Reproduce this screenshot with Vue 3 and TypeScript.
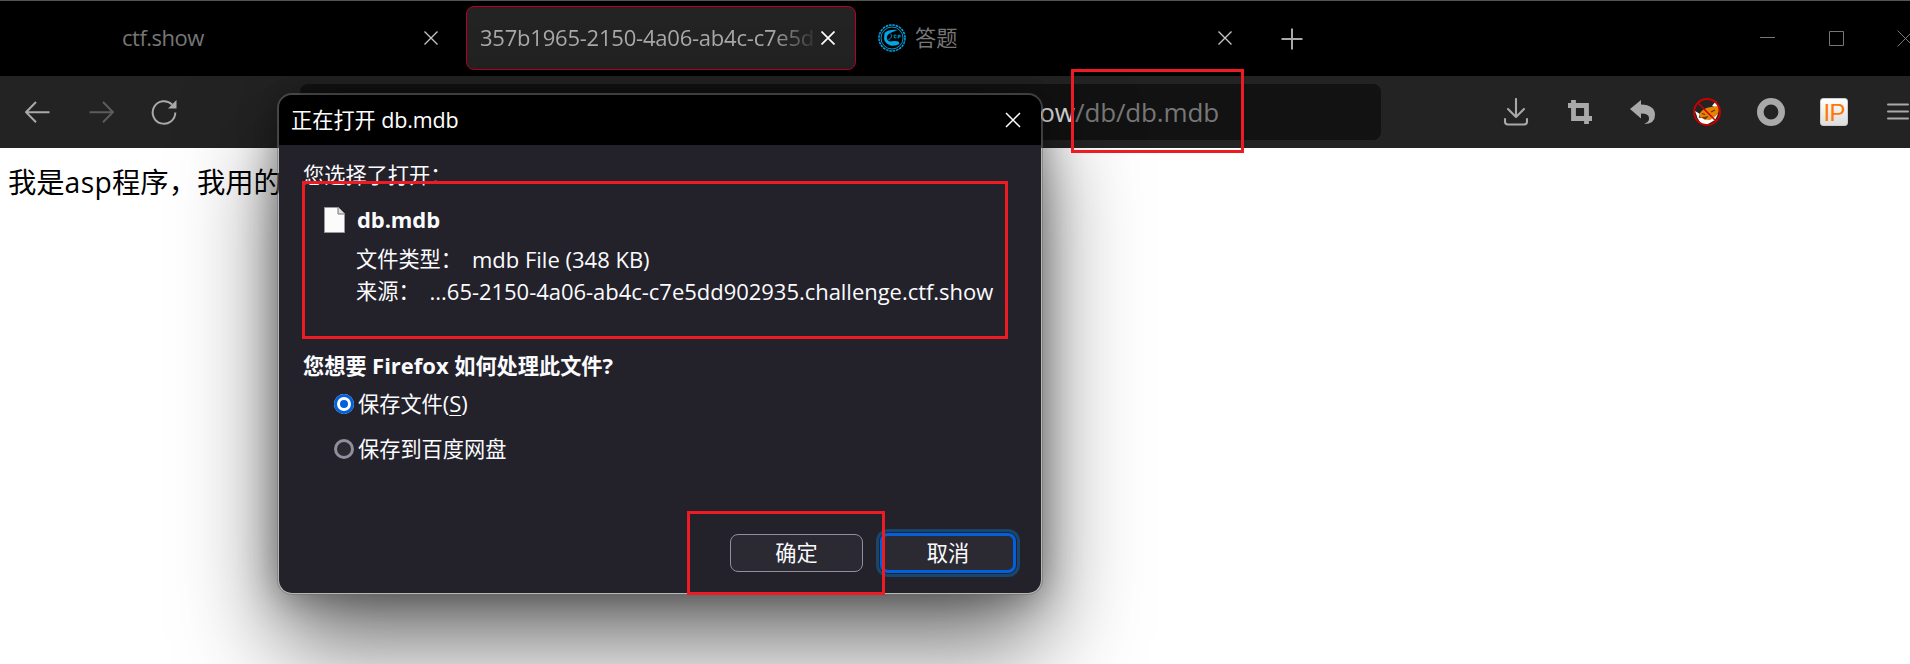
<script setup lang="ts">
import { ref } from 'vue'

const choice = ref<'save' | 'cloud'>('save')
const details = [
  { label: '文件类型：', value: 'mdb File (348 KB)', cls: 'type' },
  { label: '来源：', value: '...65-2150-4a06-ab4c-c7e5dd902935.challenge.ctf.show', cls: 'source' },
]
</script>

<template>
  <div class="screen">
    <header class="tabs">
      <div class="tab first">
        <span class="ctf">ctf.show</span>
        <svg class="x" width="14" height="14" viewBox="0 0 14 14"><path d="M.5.5l13 13M13.5.5l-13 13" /></svg>
      </div>
      <div class="tab active">
        <span class="host">357b1965-2150-4a06-ab4c-c7e5d</span>
        <svg class="x" width="14" height="14" viewBox="0 0 14 14"><path d="M.5.5l13 13M13.5.5l-13 13" /></svg>
      </div>
      <div class="tab third">
        <svg class="fav" width="28" height="28" viewBox="0 0 28 28" fill="none" stroke="#00a8e8">
          <circle cx="14" cy="14" r="13" stroke-width="1.500" stroke-dasharray="2.600 .8" />
          <circle cx="14" cy="14" r="11" stroke-width=".9" />
          <path d="M6.500 9Q11 5 19.500 6L14 8.200Q9 10 8.800 13.500Q9 17 12 17.500Q17 16.500 20.500 17.500L21.500 20Q17 22.500 12.500 21.500Q7 19.500 6 15Z" fill="#00a8e8" stroke="none" />
          <path d="M12 9.500Q15 11 13 13.500L10.500 16M18.500 11.200h-2.300v2.600h2.300M20.200 14.500v-3.200h2v1.600h-2" stroke-width=".9" />
        </svg>
        <span class="quiz">答题</span>
        <svg class="x" width="14" height="14" viewBox="0 0 14 14"><path d="M.5.5l13 13M13.5.5l-13 13" /></svg>
      </div>
      <svg class="plus" width="22" height="22" viewBox="0 0 22 22"><path d="M11 .5v21M.5 11h21" /></svg>
      <div class="controls">
        <svg width="15" height="17" viewBox="0 0 15 17"><path d="M0 7.500h15" /></svg>
        <svg width="15" height="15" viewBox="0 0 15 15"><path d="M.5.5h14v14H.5z" /></svg>
        <svg width="17" height="17" viewBox="0 0 17 17"><path d="M.5.5l16 16M16.500.5l-16 16" /></svg>
      </div>
    </header>

    <nav class="toolbar">
      <div class="nav">
        <svg width="25" height="22" viewBox="0 0 25 22"><path d="M24.500 11.200H1.500M11 1L1 11.200L11 21.200" /></svg>
        <svg class="dim" width="25" height="22" viewBox="0 0 25 22"><path d="M.5 11.200H23.500M14 1L24 11.200L14 21.200" /></svg>
        <svg width="26" height="26" viewBox="0 0 26 26"><path d="M24.300 13.500A11.300 11.300 0 1 1 21 5.500" /><path d="M25.500 1v8.500H17z" fill="#a9a9a9" stroke="none" /></svg>
      </div>
      <div class="url"><span class="bright">challenge.ctf.show</span><span class="path">/db/db.mdb</span></div>
      <div class="actions">
        <svg width="26" height="28" viewBox="0 0 26 28"><path d="M13 1v18M5 11l8 8 8-8M2 21v2.500q0 3 3 3h16q3 0 3-3V21" fill="none" stroke="#a9a9a9" stroke-width="2.100" stroke-linecap="round" stroke-linejoin="round" /></svg>
        <svg width="26" height="26" viewBox="0 0 26 26"><path d="M6.500 1v18.500h18.500M1 6.500h18.500v18.500" fill="none" stroke="#a9a9a9" stroke-width="4.800" /></svg>
        <svg width="26" height="26" viewBox="0 0 26 26"><path d="M0 10L11 1v4.500Q25 6 25 16Q25 25 14 25Q19.500 23 19 18.500Q18.500 14.500 11 14.500V19.500Z" fill="#a9a9a9" /></svg>
        <svg width="28" height="28" viewBox="0 0 28 28">
          <path d="M2 13l5 3-2 5zM19 8l4-5 2 7zM4 19q8 3 21-3l-3 6-7 4H8z" fill="#fff" />
          <path d="M7 15Q10 10 18 9L25 8Q27 14 23 18L17 22Q10 22 6 18Z" fill="#e88204" />
          <path d="M9 15.500l3 1M18 14l4-2M10 19.500l4-.5-2 2z" stroke="#663600" stroke-width="1.200" fill="#fff" />
          <circle cx="14" cy="14" r="13" fill="none" stroke="#c80000" stroke-width="1.900" /><path d="M5 5l18 18" stroke="#c80000" stroke-width="1.600" />
        </svg>
        <svg width="30" height="28" viewBox="0 0 30 28"><circle cx="15" cy="14" r="10.700" fill="none" stroke="#a9a9a9" stroke-width="6.600" /></svg>
        <span class="ip">IP</span>
        <svg width="22" height="18" viewBox="0 0 22 18"><path d="M1 1.500h20M1 8.500h20M1 15.500h20" fill="none" stroke="#a9a9a9" stroke-width="2" stroke-linecap="round" /></svg>
      </div>
    </nav>

    <main class="page">我是<span>asp</span>程序，我用的</main>

    <section class="dialog">
      <div class="title">
        <span>正在打开 <i>db.mdb</i></span>
        <svg width="16" height="16" viewBox="0 0 16 16"><path d="M1 1l14 14M15 1L1 15" fill="none" stroke="#fff" stroke-width="1.500" /></svg>
      </div>
      <div class="body">
        <div class="intro">您选择了打开：</div>
        <div class="file">
          <svg width="21" height="26" viewBox="0 0 21 26"><path d="M.5.5h14l6 6v19H.5z" fill="#fbfbfb" stroke="#999" /><path d="M14 .5V7h6.500" fill="#ddd" stroke="#777" /></svg>
          <b>db.mdb</b>
        </div>
        <div v-for="d in details" :key="d.cls" class="detail">
          <span class="label">{{ d.label }}</span><span :class="d.cls">{{ d.value }}</span>
        </div>
        <div class="question">您想要 <i>Firefox</i> 如何处理此文件<i>?</i></div>
        <div class="option" @click="choice = 'save'"><span class="radio" :class="{ on: choice === 'save' }"></span><span class="text">保存文件<i>(<u>S</u>)</i></span></div>
        <div class="option" @click="choice = 'cloud'"><span class="radio" :class="{ on: choice === 'cloud' }"></span><span class="text">保存到百度网盘</span></div>
        <div class="buttons"><button>确定</button><button class="focus">取消</button></div>
      </div>
    </section>

    <div class="mark mark-url"></div>
    <div class="mark mark-file"></div>
    <div class="mark mark-ok"></div>
  </div>
</template>

<style>
body { margin: 0; overflow: hidden; }
</style>

<style scoped>
.screen { position: relative; width: 1910px; height: 664px; overflow: hidden; background: #fff; font-family: "Open Sans", "Noto Sans CJK SC", sans-serif; font-size: 21.200px; }
.screen * { box-sizing: border-box; }
i { font-style: normal; font-size: 22px; line-height: 1; }
svg { display: block; flex: none; }
.tabs { height: 76px; background: #000; border-top: 1px solid #555; display: flex; align-items: center; }
.tab { flex: none; height: 64px; display: flex; align-items: center; white-space: nowrap; color: #777; margin-bottom: 1px; }
.tab span { margin-top: -2px; }
.tab .x { fill: none; stroke: #c4c4c4; stroke-width: 1.400; }
.first { width: 466px; padding-left: 122px; }
.ctf { font-size: 22px; letter-spacing: -.5px; width: 302px; }
.active { width: 390px; border: 1px solid #b8002b; border-radius: 8px; background: #232323; padding-left: 13px; }
.host { font-size: 22px; color: #a9a9a9; width: 339px; letter-spacing: -.22px; margin-right: 2px; -webkit-mask-image: linear-gradient(90deg, #000 292px, transparent 340px); mask-image: linear-gradient(90deg, #000 292px, transparent 340px); }
.active .x { stroke: #fff; stroke-width: 1.700; }
.third { width: 425px; padding-left: 22px; }
.quiz { width: 312px; padding-left: 9px; }
.third .quiz { margin-top: -4px; }
.plus { fill: none; stroke: #a9a9a9; stroke-width: 2; margin-top: 1px; }
.controls { display: flex; align-items: center; gap: 53.500px; margin-left: 457px; fill: none; stroke: #777; stroke-width: 1; }
.toolbar { height: 72px; background: #232323; display: flex; align-items: center; }
.nav { flex: none; display: flex; width: 300px; align-items: center; padding-left: 25px; gap: 39px; fill: none; stroke: #a9a9a9; stroke-width: 2; }
.nav svg:last-child { margin-left: -2px; }
.dim { stroke: #5c5c5c; }
.url { flex: none; width: 1081px; height: 56px; border-radius: 8px; background: #121212; display: flex; align-items: center; font-size: 26px; white-space: nowrap; }
.url span { margin-top: -1px; }
.bright { width: 775px; text-align: right; color: #e0e0e0; }
.path { color: #777; letter-spacing: -.15px; }
.actions { flex: none; display: grid; grid-template-columns: repeat(7, 63.700px); margin-left: 103px; align-items: center; justify-items: center; }
.ip { width: 28px; height: 28px; border-radius: 3px; background: linear-gradient(#fff, #ddd); border: 1px solid #ccc; color: #ff7800; font: 24px/27px "Liberation Sans", sans-serif; text-align: center; letter-spacing: -.5px; }
.page { height: 516px; padding: 13px 8px; font-size: 28.300px; line-height: 42px; color: #000; }
.page span { letter-spacing: .3px; }
.dialog { position: absolute; left: 277px; top: 93px; width: 766px; height: 502px; border: 2px solid rgba(110, 110, 110, .5); border-radius: 15px; background: #23222b; background-clip: padding-box; color: #fbfbfe; overflow: hidden; box-shadow: 0 48px 96px rgba(0, 0, 0, .58), 0 3px 36px rgba(0, 0, 0, .34); display: flex; flex-direction: column; white-space: nowrap; }
.title { flex: none; height: 50px; background: #000; display: flex; align-items: center; justify-content: space-between; padding: 0 20px 0 12px; color: #fff; }
.title span { margin-top: -4px; }
.title i { font-size: 21.500px; letter-spacing: -.15px; }
.body { flex: 1; padding: 15px 22px 0 24px; display: flex; flex-direction: column; }
.body > div { flex: none; }
.intro { height: 30px; line-height: 30px; }
.file { height: 30px; margin: 15px 0 9px 21px; display: flex; align-items: center; gap: 12px; }
.file b { font-size: 22px; margin-top: -3px; letter-spacing: -.1px; }
.detail { height: 32px; line-height: 32px; padding-left: 53px; display: flex; }
.label { margin-right: 10px; margin-top: -1px; }
.type, .source { font-size: 22px; margin-top: -1px; }
.source { letter-spacing: -.03px; }
.question { height: 30px; line-height: 30px; margin-top: 43px; font-weight: 700; }
.option { height: 30px; margin: 8px 0 7px 31px; display: flex; align-items: center; gap: 4px; }
.option .text { margin-top: -3px; }
.option:nth-child(7) .text { margin-top: -4px; }
.option u { text-underline-offset: 3px; text-decoration-thickness: 1px; }
.radio { width: 20px; height: 20px; border-radius: 50%; border: 3px solid #8f8f9d; background: #2b2a33; }
.radio.on { border: 6px solid #fff; background: #0060df; outline: 3px solid #0060df; outline-offset: -3px; }
.buttons { display: flex; justify-content: flex-end; gap: 17px; margin-top: 62px; align-items: center; }
button { width: 133px; height: 38px; padding: 0; border: 1px solid #8f8f9d; border-radius: 8px; background: #2b2a33; color: #fbfbfe; font: inherit; line-height: 34px; }
.focus { width: 136px; height: 40px; border: 3px solid #0060df; outline: 3px solid #18466e; outline-offset: 1px; margin-right: 3px; }
.mark { position: absolute; border: 3px solid #ed1c24; pointer-events: none; }
.mark-url { left: 1071px; top: 69px; width: 173px; height: 84px; }
.mark-file { left: 302px; top: 181px; width: 706px; height: 158px; }
.mark-ok { left: 687px; top: 511px; width: 198px; height: 84px; }
</style>
